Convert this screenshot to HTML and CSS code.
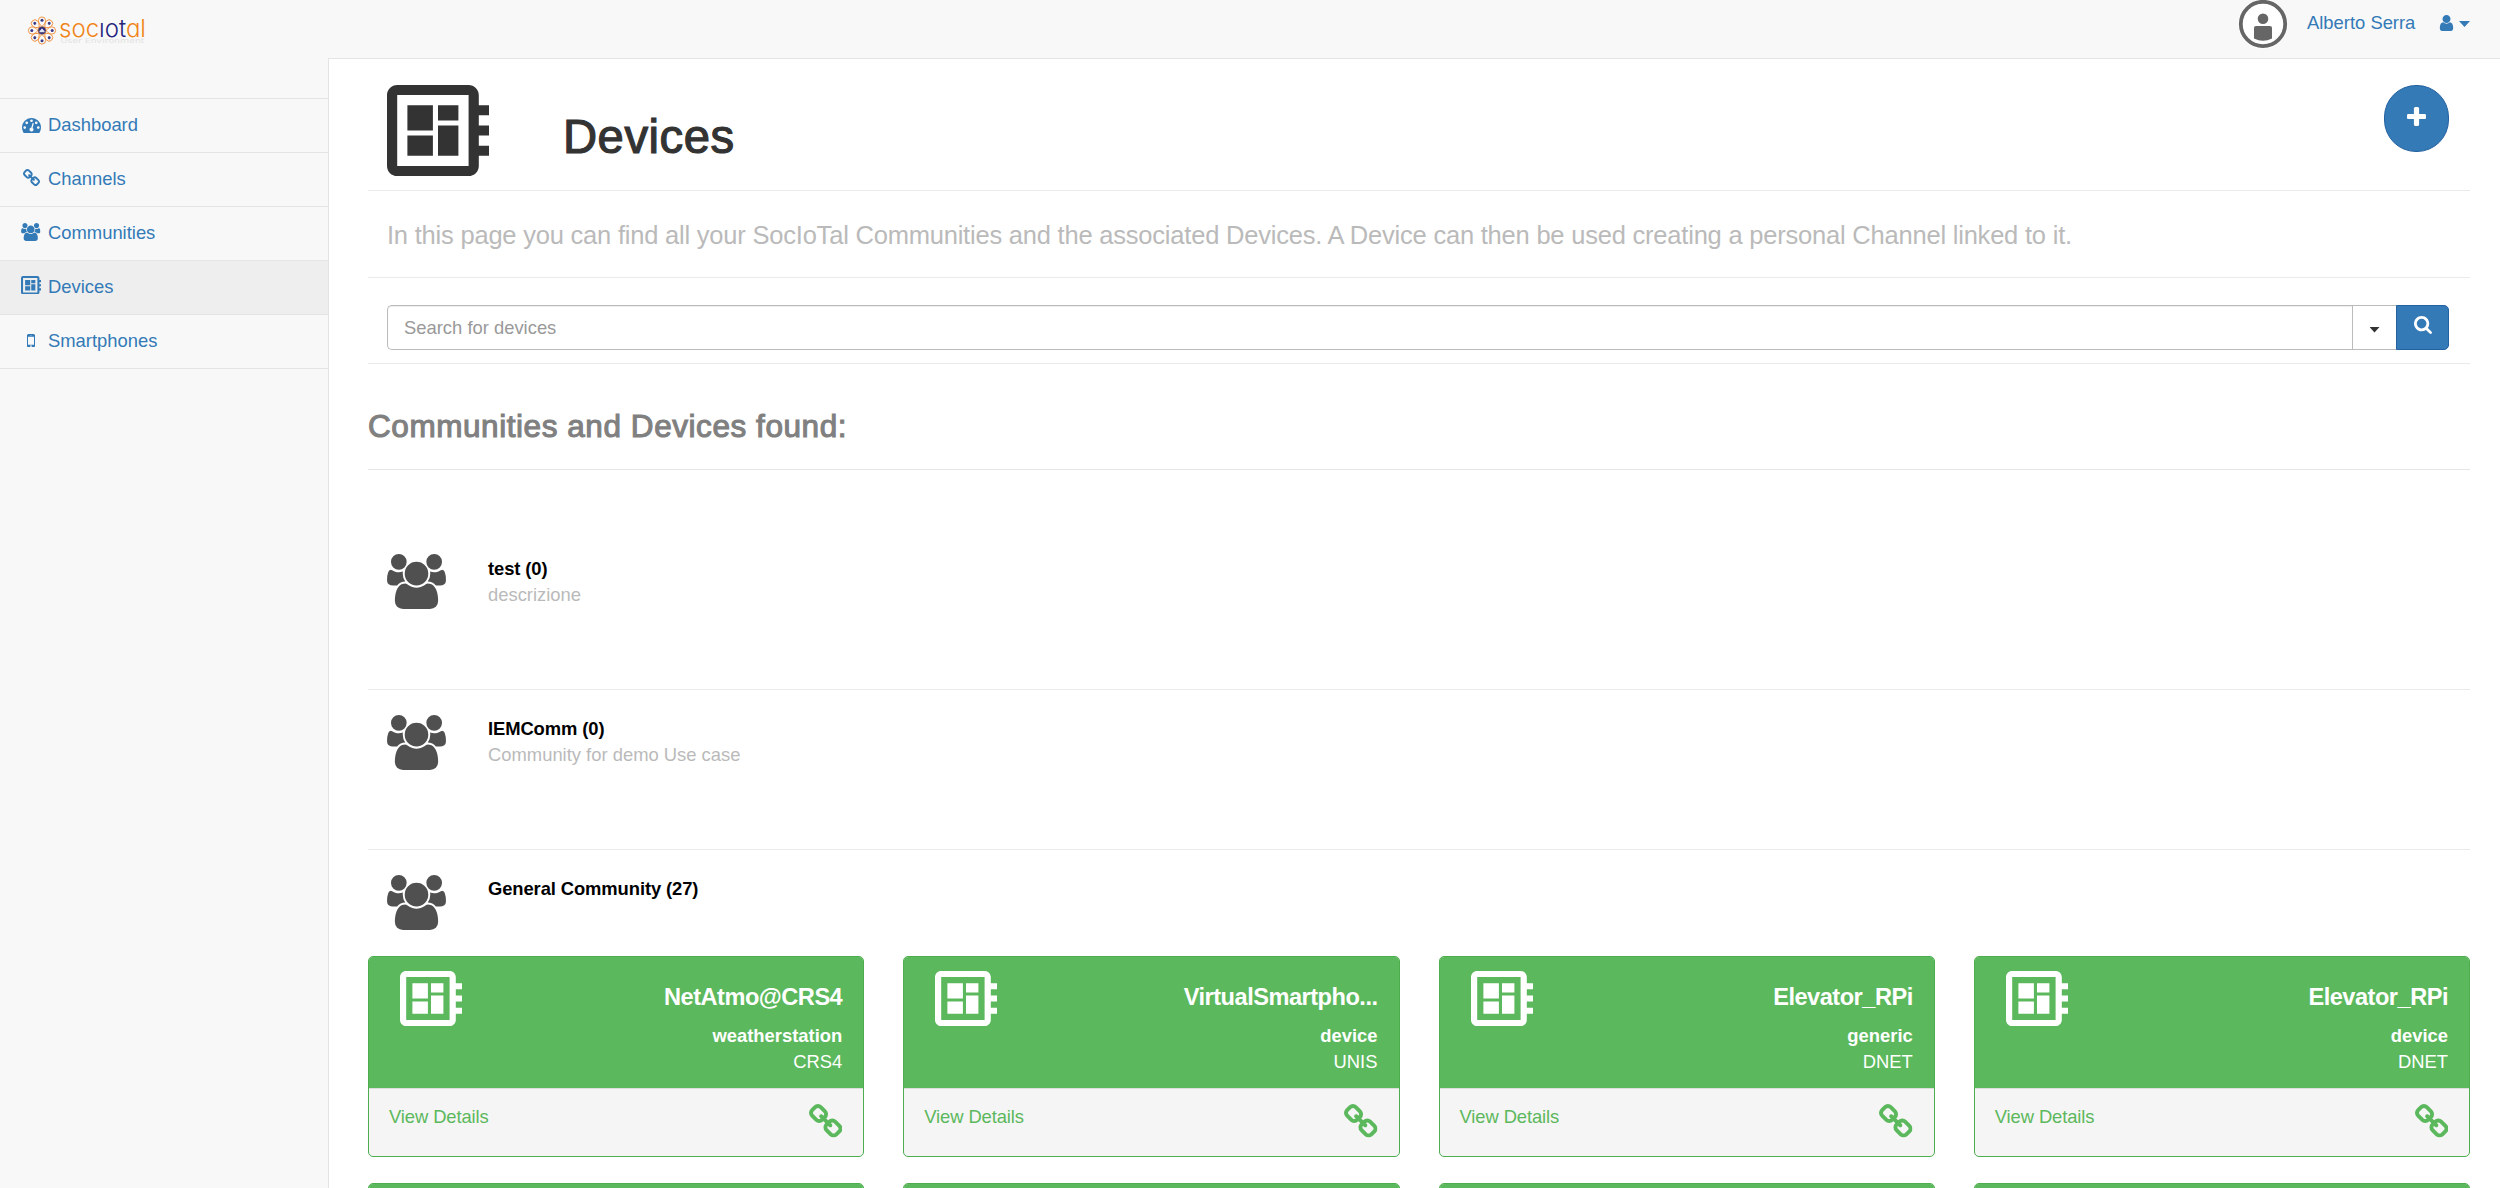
FILE: index.html
```html
<!DOCTYPE html>
<html lang="en">
<head>
<meta charset="utf-8">
<title>Devices</title>
<link rel="stylesheet" href="styles.css">
</head>
<body>
<svg class="sprite" aria-hidden="true">
  <symbol id="board" viewBox="2 3 20 18" preserveAspectRatio="none"><path d="M22 9V7h-2V5c0-1.1-.9-2-2-2H4c-1.1 0-2 .9-2 2v14c0 1.1.9 2 2 2h14c1.1 0 2-.9 2-2v-2h2v-2h-2v-2h2v-2h-2V9h2zm-4 10H4V5h14v14zM6 13h5v4H6zm6-6h4v3h-4zM6 7h5v5H6zm6 4h4v6h-4z"/></symbol>
  <symbol id="group" viewBox="0 0 1920 1792"><path d="M593 896q-162 5-265 128h-134q-82 0-138-40.5t-56-118.5q0-353 124-353 6 0 43.5 21t97.5 42.5 119 21.5q67 0 133-23-5 37-5 66 0 139 81 256zm1071 637q0 120-73 189.5t-194 69.5h-874q-121 0-194-69.5t-73-189.5q0-53 3.5-103.5t14-109 26.5-108.5 43-97.5 62-81 85.5-53.5 111.5-20q10 0 43 21.5t73 48 107 48 135 21.5 135-21.5 107-48 73-48 43-21.5q61 0 111.5 20t85.5 53.5 62 81 43 97.5 26.5 108.5 14 109 3.5 103.5zm-1024-1277q0 106-75 181t-181 75-181-75-75-181 75-181 181-75 181 75 75 181zm704 384q0 159-112.5 271.5t-271.5 112.5-271.5-112.5-112.5-271.5 112.5-271.5 271.5-112.5 271.5 112.5 112.5 271.5zm576 225q0 78-56 118.5t-138 40.5h-134q-103-123-265-128 81-117 81-256 0-29-5-66 66 23 133 23 59 0 119-21.5t97.5-42.5 43.5-21q124 0 124 353zm-128-609q0 106-75 181t-181 75-181-75-75-181 75-181 181-75 181 75 75 181z"/></symbol>
  <symbol id="gauge" viewBox="0 256 1792 1408"><path d="M384 1152q0-53-37.5-90.5t-90.5-37.5-90.5 37.5-37.5 90.5 37.5 90.5 90.5 37.5 90.5-37.5 37.5-90.5zm192-448q0-53-37.5-90.5t-90.5-37.5-90.5 37.5-37.5 90.5 37.5 90.5 90.5 37.5 90.5-37.5 37.5-90.5zm428 481l101-382q6-26-7.5-48.5t-38.5-29.5-48 6.5-30 39.5l-101 382q-60 5-107 43.5t-63 98.5q-20 77 20 146t117 89 146-20 89-117q16-60-6-117t-72-91zm660-33q0-53-37.5-90.5t-90.5-37.5-90.5 37.5-37.5 90.5 37.5 90.5 90.5 37.5 90.5-37.5 37.5-90.5zm-640-640q0-53-37.5-90.5t-90.5-37.5-90.5 37.5-37.5 90.5 37.5 90.5 90.5 37.5 90.5-37.5 37.5-90.5zm448 192q0-53-37.5-90.5t-90.5-37.5-90.5 37.5-37.5 90.5 37.5 90.5 90.5 37.5 90.5-37.5 37.5-90.5zm320 448q0 261-141 483-19 29-54 29h-1402q-35 0-54-29-141-221-141-483 0-182 71-348t191-286 286-191 348-71 348 71 286 191 191 286 71 348z"/></symbol>
  <symbol id="chain" viewBox="80 16 1632 1632"><path d="M1520 1216q0-40-28-68l-208-208q-28-28-68-28-42 0-72 32 3 3 19 18.5t21.5 21.5 15 19 13 25.5 3.5 27.5q0 40-28 68t-68 28q-15 0-27.5-3.5t-25.5-13-19-15-21.5-21.5-18.5-19q-33 31-33 73 0 40 28 68l206 207q27 27 68 27 40 0 68-26l147-146q28-28 28-67zm-703-705q0-40-28-68l-206-207q-28-28-68-28-39 0-68 27l-147 146q-28 28-28 67 0 40 28 68l208 208q27 27 68 27 42 0 72-31-3-3-19-18.5t-21.5-21.5-15-19-13-25.5-3.5-27.5q0-40 28-68t68-28q15 0 27.5 3.5t25.5 13 19 15 21.5 21.5 18.5 19q33-31 33-73zm895 705q0 120-85 203l-147 146q-83 83-203 83-121 0-204-85l-206-207q-83-83-83-203 0-123 88-209l-88-88q-86 88-208 88-120 0-204-84l-208-208q-84-84-84-204t85-203l147-146q83-83 203-83 121 0 204 85l206 207q83 83 83 203 0 123-88 209l88 88q86-88 208-88 120 0 204 84l208 208q84 84 84 204z"/></symbol>
  <symbol id="mobile" viewBox="512 256 768 1280"><path d="M976 1408q0-33-23.5-56.5t-56.5-23.5-56.5 23.5-23.5 56.5 23.5 56.5 56.5 23.5 56.5-23.5 23.5-56.5zm208-160v-704q0-13-9.5-22.5t-22.5-9.5h-512q-13 0-22.5 9.5t-9.5 22.5v704q0 13 9.5 22.5t22.5 9.5h512q13 0 22.5-9.5t9.5-22.5zm-192-848q0-16-16-16h-160q-16 0-16 16t16 16h160q16 0 16-16zm288-16v1024q0 52-38 90t-90 38h-512q-52 0-90-38t-38-90v-1024q0-52 38-90t90-38h512q52 0 90 38t38 90z"/></symbol>
  <symbol id="user" viewBox="256 128 1280 1536"><path d="M1536 1399q0 109-62.5 187t-150.5 78h-854q-88 0-150.5-78t-62.5-187q0-85 8.5-160.5t31.5-152 58.5-131 94-89 134.5-34.5q131 128 313 128t313-128q76 0 134.5 34.5t94 89 58.5 131 31.5 152 8.5 160.5zm-256-887q0 159-112.5 271.5t-271.5 112.5-271.5-112.5-112.5-271.5 112.5-271.5 271.5-112.5 271.5 112.5 112.5 271.5z"/></symbol>
  <symbol id="plus" viewBox="192 128 1408 1408"><path d="M1600 736v192q0 40-28 68t-68 28h-416v416q0 40-28 68t-68 28h-192q-40 0-68-28t-28-68v-416h-416q-40 0-68-28t-28-68v-192q0-40 28-68t68-28h416v-416q0-40 28-68t68-28h192q40 0 68 28t28 68v416h416q40 0 68 28t28 68z"/></symbol>
  <symbol id="search" viewBox="64 128 1664 1664"><path d="M1216 832q0-185-131.5-316.5t-316.5-131.5-316.5 131.5-131.5 316.5 131.5 316.5 316.5 131.5 316.5-131.5 131.5-316.5zm512 832q0 52-38 90t-90 38q-54 0-90-38l-343-342q-179 124-399 124-143 0-273.5-55.5t-225-150-150-225-55.5-273.5 55.5-273.5 150-225 225-150 273.5-55.5 273.5 55.5 225 150 150 225 55.5 273.5q0 220-124 399l343 343q37 37 37 90z"/></symbol>
</svg>

<header class="topbar">
  <svg class="logo" viewBox="0 0 120 30">
    <g class="logo-petals">
      <g id="petal"><path d="M14 10.500C12 8.500 10.400 6.800 10.400 4.500a3.600 3.600 0 0 1 7.200 0C17.600 6.800 16 8.500 14 10.500z"/><circle cx="14" cy="4.300" r="1.500"/></g>
      <use href="#petal" transform="rotate(45 14 14.500)"/><use href="#petal" transform="rotate(90 14 14.500)"/><use href="#petal" transform="rotate(135 14 14.500)"/><use href="#petal" transform="rotate(180 14 14.500)"/><use href="#petal" transform="rotate(225 14 14.500)"/><use href="#petal" transform="rotate(270 14 14.500)"/><use href="#petal" transform="rotate(315 14 14.500)"/>
    </g>
    <circle class="logo-core" cx="14" cy="14.500" r="4"/>
    <path class="logo-people" d="M11.500 16.200v-1.500l1.200-.700.600-1.200h1.400l.600 1.200 1.200.700v1.500z"/>
    <text class="logo-sub" x="32.500" y="27.300" textLength="84" lengthAdjust="spacingAndGlyphs">User Environment</text>
    <text class="logo-name" x="31" y="21" textLength="87" lengthAdjust="spacingAndGlyphs">soc<tspan class="navy">ıot</tspan>al</text>
  </svg>
  <div class="account">
    <svg class="avatar" viewBox="0 0 50 50"><circle cx="25" cy="25" r="24.800" fill="#fff"/><circle cx="25" cy="25" r="22.200" fill="#fff" stroke="#666" stroke-width="3.800"/><circle cx="25" cy="19.700" r="5.300" fill="#666"/><path fill="#666" d="M16 29q0-2 2-2h14q2 0 2 2v10.500q-9 4.500-18 0z"/></svg>
    <a class="account-name">Alberto Serra</a>
    <svg class="icon-user"><use href="#user"/></svg>
    <span class="caret"></span>
  </div>
</header>

<div class="shell">
  <nav class="sidebar">
    <a class="nav-item"><span class="nav-icon"><svg class="i-gauge"><use href="#gauge"/></svg></span><span class="nav-text">Dashboard</span></a>
    <a class="nav-item"><span class="nav-icon"><svg class="i-chain"><use href="#chain"/></svg></span><span class="nav-text">Channels</span></a>
    <a class="nav-item"><span class="nav-icon"><svg class="i-group"><use href="#group"/></svg></span><span class="nav-text">Communities</span></a>
    <a class="nav-item active"><span class="nav-icon"><svg class="i-board"><use href="#board"/></svg></span><span class="nav-text">Devices</span></a>
    <a class="nav-item"><span class="nav-icon"><svg class="i-mobile"><use href="#mobile"/></svg></span><span class="nav-text">Smartphones</span></a>
  </nav>

  <main class="page">
    <div class="title-row">
      <svg class="title-icon"><use href="#board"/></svg>
      <h1 class="title">Devices</h1>
      <button class="add" aria-label="Add"><svg><use href="#plus"/></svg></button>
    </div>
    <div class="intro-row"><p class="intro">In this page you can find all your SocIoTal Communities and the associated Devices. A Device can then be used creating a personal Channel linked to it.</p></div>
    <div class="search-row">
      <div class="search-input"><span class="placeholder">Search for devices</span></div>
      <div class="search-drop"><span class="caret dark"></span></div>
      <div class="search-go"><svg><use href="#search"/></svg></div>
    </div>
    <div class="found-row"><h3 class="found">Communities and Devices found:</h3></div>

    <section class="community first">
      <svg class="community-icon"><use href="#group"/></svg>
      <div><div class="community-name">test (0)</div><div class="community-desc">descrizione</div></div>
    </section>
    <section class="community">
      <svg class="community-icon"><use href="#group"/></svg>
      <div><div class="community-name">IEMComm (0)</div><div class="community-desc">Community for demo Use case</div></div>
    </section>
    <section class="community last">
      <svg class="community-icon"><use href="#group"/></svg>
      <div><div class="community-name">General Community (27)</div></div>
    </section>

    <div class="cards">
      <article class="card">
        <div class="card-head"><svg class="card-icon"><use href="#board"/></svg><div class="card-info"><h4 class="card-name">NetAtmo@CRS4</h4><div class="card-type">weatherstation</div><div class="card-org">CRS4</div></div></div>
        <div class="card-foot"><a class="details">View Details</a><svg class="card-link"><use href="#chain"/></svg></div>
      </article>
      <article class="card">
        <div class="card-head"><svg class="card-icon"><use href="#board"/></svg><div class="card-info"><h4 class="card-name">VirtualSmartpho...</h4><div class="card-type">device</div><div class="card-org">UNIS</div></div></div>
        <div class="card-foot"><a class="details">View Details</a><svg class="card-link"><use href="#chain"/></svg></div>
      </article>
      <article class="card">
        <div class="card-head"><svg class="card-icon"><use href="#board"/></svg><div class="card-info"><h4 class="card-name">Elevator_RPi</h4><div class="card-type">generic</div><div class="card-org">DNET</div></div></div>
        <div class="card-foot"><a class="details">View Details</a><svg class="card-link"><use href="#chain"/></svg></div>
      </article>
      <article class="card">
        <div class="card-head"><svg class="card-icon"><use href="#board"/></svg><div class="card-info"><h4 class="card-name">Elevator_RPi</h4><div class="card-type">device</div><div class="card-org">DNET</div></div></div>
        <div class="card-foot"><a class="details">View Details</a><svg class="card-link"><use href="#chain"/></svg></div>
      </article>
      <article class="card"><div class="card-head"></div></article>
      <article class="card"><div class="card-head"></div></article>
      <article class="card"><div class="card-head"></div></article>
      <article class="card"><div class="card-head"></div></article>
    </div>
  </main>
</div>
</body>
</html>
```
FILE: styles.css
```css
* { box-sizing: border-box; }
body {
  margin: 0;
  height: 1188px;
  overflow: hidden;
  background: #f8f8f8;
  color: #333;
  font: 18.400px/26px "Liberation Sans", Arial, sans-serif;
}
svg { display: block; fill: currentColor; flex: none; }
.sprite { position: absolute; width: 0; height: 0; }

.topbar { display: flex; justify-content: space-between; align-items: flex-start; height: 58px; padding-right: 30px; }
.logo { width: 120px; height: 30px; margin: 16px 0 0 28px; overflow: visible; }
.logo-petals { fill: none; stroke: #ef8c35; stroke-width: .900; }
.logo-petals circle { fill: #3a3a85; stroke: none; }
.logo-core { fill: #2a2a7a; stroke: #ef8c35; stroke-width: .500; }
.logo-people { fill: #dfe3f3; }
.logo-name { font: 300 24px Inter, "Liberation Sans", sans-serif; font-feature-settings: "cv11"; fill: #f08519; }
.navy { fill: #23237d; }
.logo-sub { font: 7px "DejaVu Sans", sans-serif; fill: #e2e2e2; }
.account { display: flex; color: #337ab7; }
.avatar { width: 50px; height: 50px; margin-right: 19px; margin-top: -1px; }
.account-name { margin-top: 10px; width: 132px; }
.icon-user { width: 15px; height: 16px; margin-top: 15px; }
.caret { width: 11px; height: 6px; margin: 21px 0 0 5px; background: #337ab7; clip-path: polygon(0 0, 100% 0, 50% 100%); }

.shell { display: flex; }
.sidebar { width: 328px; padding-top: 40px; color: #337ab7; }
.nav-item { display: flex; align-items: center; height: 54px; border-top: 1px solid #e4e4e4; }
.nav-item:last-child { height: 55px; border-bottom: 1px solid #e4e4e4; }
.nav-item.active { background: #eee; }
.nav-icon { width: 20px; margin: 0 7px 0 21px; display: flex; justify-content: center; }
.nav-text { padding-bottom: 1px; }
.i-gauge { width: 19px; height: 15px; }
.i-chain { width: 17px; height: 17px; margin-bottom: 4px; }
.i-group { width: 19.500px; height: 18px; margin-bottom: 4px; }
.i-board { width: 20.500px; height: 18.500px; margin-bottom: 5px; }
.i-mobile { width: 8px; height: 13.500px; margin-bottom: 2px; }

.page { flex: 1; height: 1130px; overflow: hidden; background: #fff; border-top: 1px solid #e4e4e4; border-left: 1px solid #e4e4e4; padding: 0 30px 0 39px; }
.title-row { display: flex; height: 132px; padding: 26px 21px 0 19px; border-bottom: 1px solid #eaeaea; }
.title-icon { width: 102px; height: 91px; }
.title { margin: 26px auto 0 74px; font-size: 47.250px; line-height: 52px; font-weight: 400; letter-spacing: .500px; -webkit-text-stroke: 1.200px; }
.add { display: flex; justify-content: center; width: 65px; height: 67px; padding: 21px 0 0; background: #337ab7; border: 1px solid #2461a0; border-radius: 32px; color: #fff; }
.add svg { width: 19px; height: 19px; }
.intro-row { height: 87px; padding: 30px 19px 0; border-bottom: 1px solid #eaeaea; }
.intro { margin: 0; font-size: 25.500px; line-height: 28px; letter-spacing: -.210px; color: #bababa; white-space: nowrap; }
.search-row { display: flex; height: 86px; padding: 27px 21px 13px 19px; border-bottom: 1px solid #eaeaea; }
.search-input { flex: 1; height: 45px; padding: 9px 16px; border: 1px solid #bbb; border-right: 0; border-radius: 5px 0 0 5px; box-shadow: inset 0 1px 1px rgba(0,0,0,.075); color: #999; }
.search-drop { width: 44px; height: 45px; border: 1px solid #bbb; border-right: 0; display: flex; justify-content: center; }
.caret.dark { width: 10px; height: 5.500px; margin: 21px 0 0; background: #333; }
.search-go { width: 53px; height: 45px; padding-top: 10px; display: flex; justify-content: center; background: #337ab7; border: 1px solid #2461a0; border-radius: 0 5px 5px 0; color: #fff; }
.search-go svg { width: 18px; height: 18px; }
.found-row { height: 106px; padding-top: 45px; border-bottom: 1px solid #e6e6e6; }
.found { margin: 0; font-size: 31.500px; line-height: 35px; font-weight: 400; letter-spacing: .560px; color: #808080; -webkit-text-stroke: 1.100px; }

.community { display: flex; height: 160px; padding: 25px 19px 0; border-bottom: 1px solid #eaeaea; }
.community.first { height: 220px; padding-top: 84px; }
.community.last { height: 106px; border: 0; }
.community-icon { width: 59px; height: 55px; margin-right: 42px; color: #505050; }
.community-name { margin-top: 1px; color: #000; font-weight: 700; letter-spacing: -.100px; }
.community-desc { color: #bababa; }
.first .community-name { margin-top: 2px; }

.cards { display: grid; grid-template-columns: repeat(4, 1fr); column-gap: 39px; row-gap: 26px; }
.card { height: 201px; overflow: hidden; background: #f5f5f5; border: 1px solid #4cae4c; border-radius: 5px; }
.card-head { display: flex; justify-content: space-between; height: 132px; padding: 14px 21px 0 31px; background: #5cb85c; color: #fff; border-bottom: 1px solid #ddd; }
.card-icon { width: 62px; height: 55px; }
.card-info { text-align: right; padding-top: 13px; }
.card-name { margin: 0 0 13px; font-size: 23.600px; line-height: 26px; font-weight: 700; letter-spacing: -.500px; }
.card-type { font-weight: 700; }
.card-foot { display: flex; justify-content: space-between; padding: 15px 21px 0 20px; color: #5cb85c; }
.details { letter-spacing: -.100px; }
.card-link { width: 33.500px; height: 33.500px; }
```
